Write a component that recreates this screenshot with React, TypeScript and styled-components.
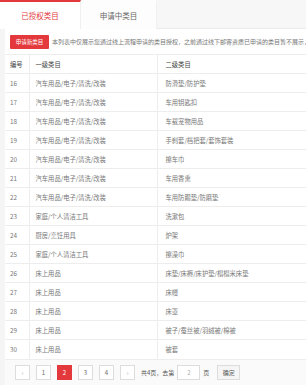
import styled, { createGlobalStyle } from "styled-components";

const GlobalStyle = createGlobalStyle`
	html, body {
		margin: 0;
		padding: 0;
		background: #f5f5f5;
		overflow: hidden;
	}
	body {
		font-family: "Noto Sans CJK SC", "Noto Sans", sans-serif;
		color: #666;
	}
`;

const Page = styled.div`
	width: 306px;
	height: 385px;
	overflow: hidden;
	display: flex;
	flex-direction: column;
`;

const TabBar = styled.div`
	display: flex;
	height: 28px;
	background: #f7f7f7;
	border-bottom: 1px solid #ebebeb;
`;

const Tab = styled.div<{ $active?: boolean; $width: number }>`
	width: ${(p) => p.$width}px;
	box-sizing: border-box;
	display: flex;
	align-items: center;
	justify-content: center;
	font-size: 7.5px;
	background: ${(p) => (p.$active ? "#fff" : "#fdfdfd")};
	border-top: 2px solid ${(p) => (p.$active ? "#e4393c" : "transparent")};
	color: ${(p) => (p.$active ? "#e4393c" : "#666")};
	border-right: 1px solid #f0f0f0;
	margin-bottom: -1px;
`;

const Panel = styled.div`
	flex: 1;
	margin-left: 5px;
	background: #fff;
	display: flex;
	flex-direction: column;
	min-height: 0;
`;

const Notice = styled.div`
	height: 25px;
	display: flex;
	align-items: center;
	padding-left: 5px;
	gap: 3px;
	white-space: nowrap;
	overflow: hidden;
`;

const RedButton = styled.button`
	flex: none;
	height: 14px;
	width: 39px;
	padding: 0;
	border: none;
	background: #e4393c;
	color: #fff;
	font-family: inherit;
	font-size: 5.5px;
	border-radius: 1px;
`;

const NoticeText = styled.span`
	font-size: 6px;
	color: #777;
	overflow: hidden;
	text-overflow: clip;
`;

const Table = styled.table`
	border-collapse: collapse;
	width: 301px;
	table-layout: fixed;
	font-size: 6.3px;
`;

const Cell = styled.td<{ $head?: boolean }>`
	height: 19px;
	padding: 0 0 0 6px;
	box-sizing: border-box;
	border-top: 1px solid #ededed;
	border-right: 1px solid #ededed;
	color: ${(p) => (p.$head ? "#444" : "#777")};
	white-space: nowrap;
	overflow: hidden;
	&:first-child {
		padding-left: 5px;
	}
	&:last-child {
		border-right: none;
		padding-left: 8px;
	}
`;

const Row = styled.tr`
	background: #fff;
`;

const Pager = styled.div`
	flex: 1;
	display: flex;
	align-items: center;
	padding-left: 10px;
	gap: 6px;
	border-top: 1px solid #ededed;
	background: #fafafa;
	font-size: 6px;
`;

const PageBtn = styled.span<{ $active?: boolean; $muted?: boolean }>`
	width: 15px;
	height: 15px;
	box-sizing: border-box;
	display: flex;
	align-items: center;
	justify-content: center;
	border: 1px solid ${(p) => (p.$active ? "#e4393c" : "#ddd")};
	background: ${(p) => (p.$active ? "#e4393c" : "#fff")};
	color: ${(p) => (p.$active ? "#fff" : p.$muted ? "#bbb" : "#666")};
	font-size: ${(p) => (p.$muted ? "7px" : "6px")};
`;

const PagerText = styled.span`
	color: #555;
	display: flex;
	align-items: center;
	gap: 3px;
`;

const PageInput = styled.span`
	width: 23px;
	height: 15px;
	box-sizing: border-box;
	border: 1px solid #ddd;
	background: #fff;
	display: flex;
	align-items: center;
	justify-content: center;
	color: #aaa;
`;

const OkBtn = styled.span`
	width: 23px;
	height: 15px;
	box-sizing: border-box;
	border: 1px solid #ddd;
	background: #f5f5f5;
	display: flex;
	align-items: center;
	justify-content: center;
	color: #555;
	margin-left: 2px;
`;

const rows: [number, string, string][] = [
	[16, "汽车用品/电子/清洗/改装", "防滑垫/防护垫"],
	[17, "汽车用品/电子/清洗/改装", "车用钥匙扣"],
	[18, "汽车用品/电子/清洗/改装", "车载宠物用品"],
	[19, "汽车用品/电子/清洗/改装", "手刹套/档把套/套饰套装"],
	[20, "汽车用品/电子/清洗/改装", "擦车巾"],
	[21, "汽车用品/电子/清洗/改装", "车用香熏"],
	[22, "汽车用品/电子/清洗/改装", "车用防踢垫/防磨垫"],
	[23, "家庭/个人清洁工具", "洗漱包"],
	[24, "厨房/烹饪用具", "炉架"],
	[25, "家庭/个人清洁工具", "擦澡巾"],
	[26, "床上用品", "床垫/床褥/床护垫/榻榻米床垫"],
	[27, "床上用品", "床幔"],
	[28, "床上用品", "床罩"],
	[29, "床上用品", "被子/蚕丝被/羽绒被/棉被"],
	[30, "床上用品", "被套"],
];

export default function App() {
	return (
		<Page>
			<GlobalStyle />
			<TabBar>
				<Tab $active $width={81}>已授权类目</Tab>
				<Tab $width={76}>申请中类目</Tab>
			</TabBar>
			<Panel>
				<Notice>
					<RedButton>申请新类目</RedButton>
					<NoticeText>
						本列表中仅展示您通过线上流程申请的类目授权，之前通过线下邮寄资质已申请的类目暂不展示，很抱歉
					</NoticeText>
				</Notice>
				<Table>
					<colgroup>
						<col style={{ width: 24 }} />
						<col style={{ width: 128 }} />
						<col />
					</colgroup>
					<tbody>
						<Row>
							<Cell $head>编号</Cell>
							<Cell $head>一级类目</Cell>
							<Cell $head>二级类目</Cell>
						</Row>
						{rows.map(([id, first, second]) => (
							<Row key={id}>
								<Cell>{id}</Cell>
								<Cell>{first}</Cell>
								<Cell>{second}</Cell>
							</Row>
						))}
					</tbody>
				</Table>
				<Pager>
					<PageBtn $muted>‹</PageBtn>
					<PageBtn>1</PageBtn>
					<PageBtn $active>2</PageBtn>
					<PageBtn>3</PageBtn>
					<PageBtn>4</PageBtn>
					<PageBtn $muted>›</PageBtn>
					<PagerText>
						共4页，去第
						<PageInput>2</PageInput>页
					</PagerText>
					<OkBtn>确定</OkBtn>
				</Pager>
			</Panel>
		</Page>
	);
}
